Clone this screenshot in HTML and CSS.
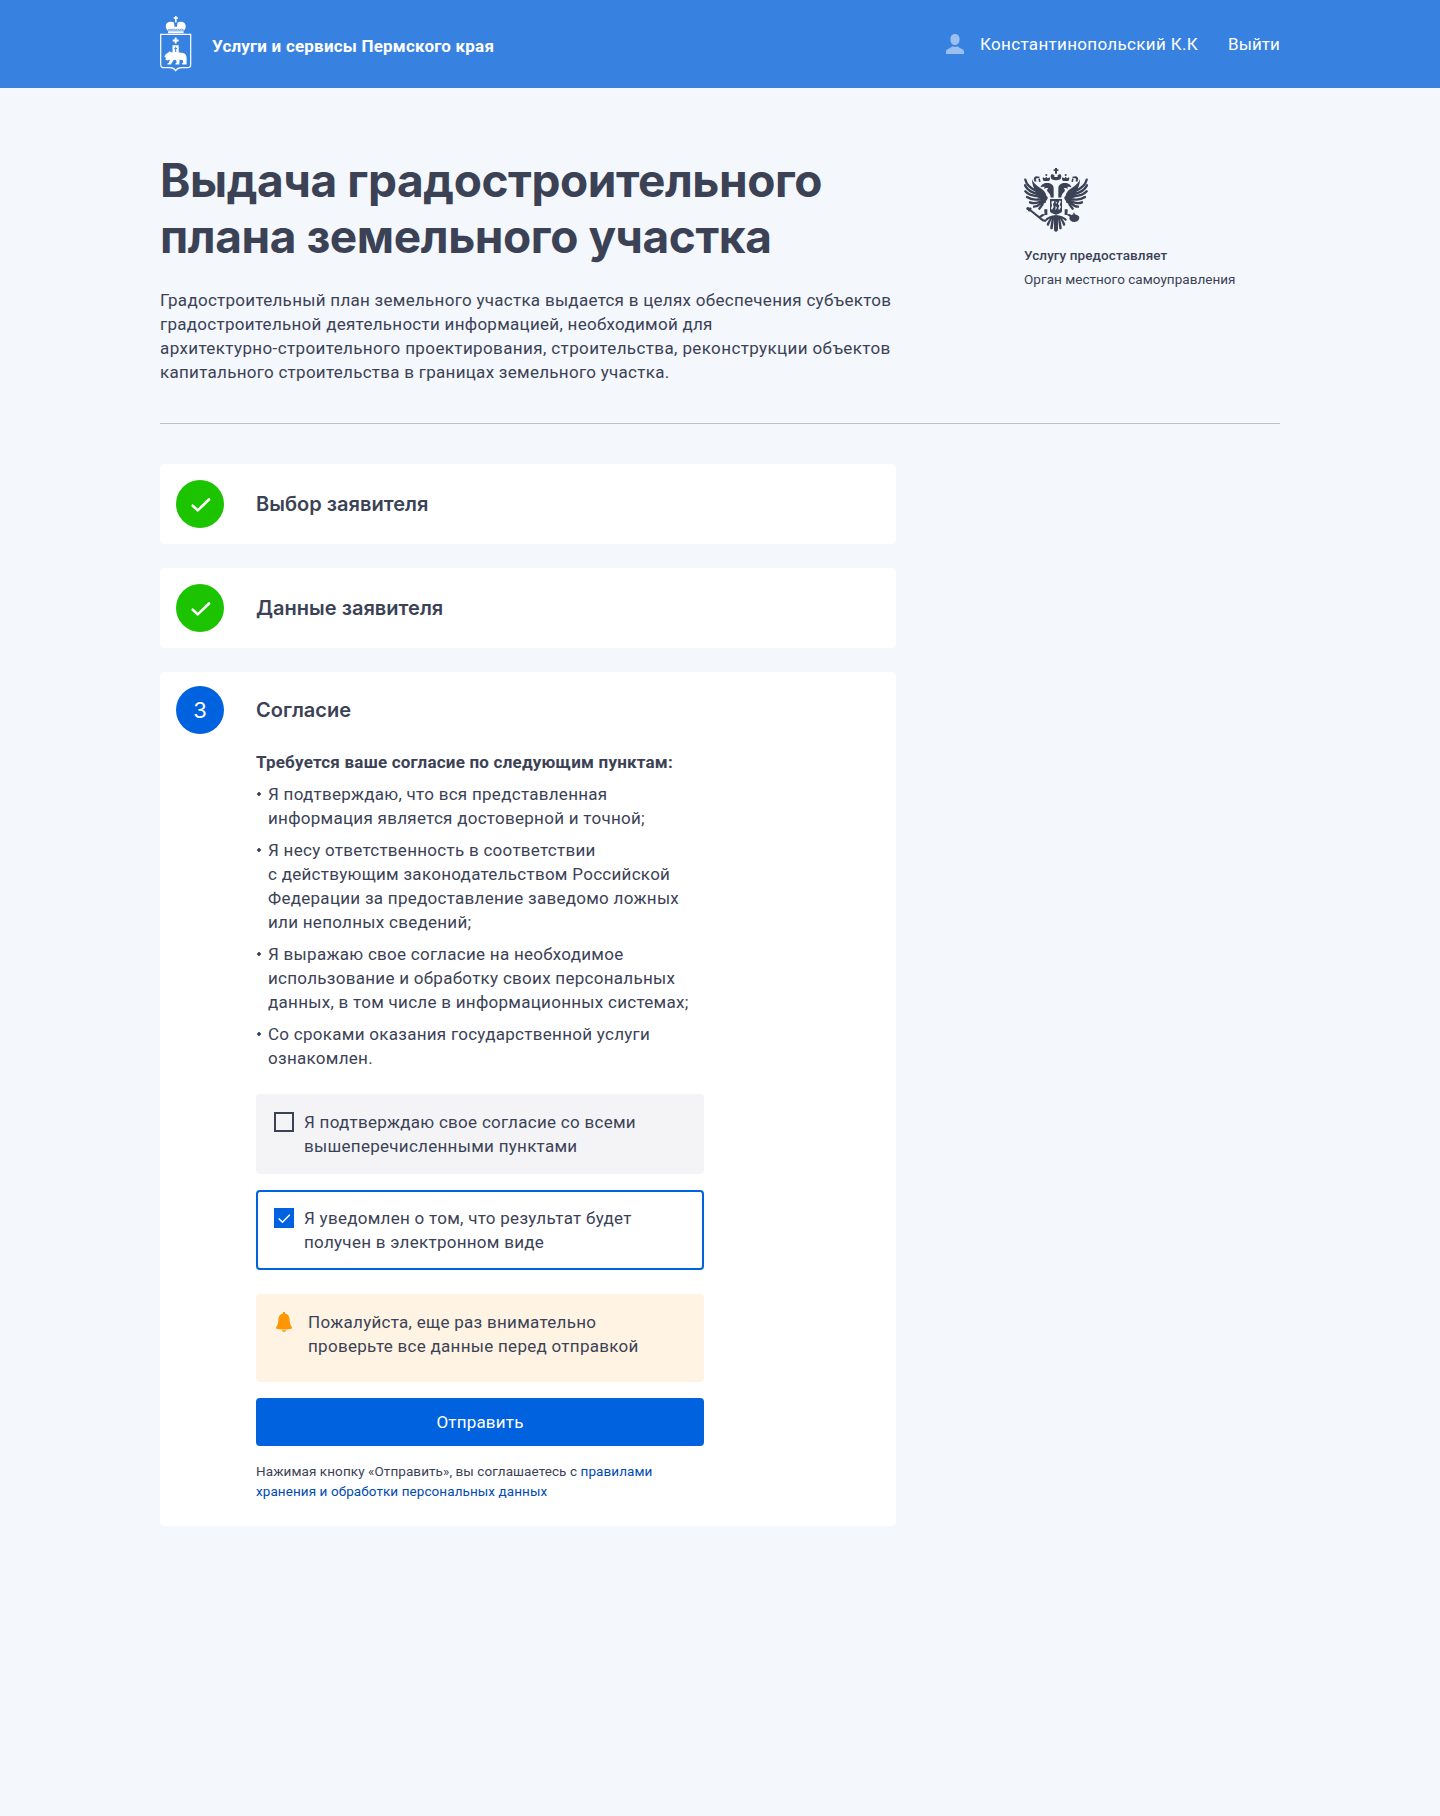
FILE: index.html
```html
<!DOCTYPE html>
<html lang="ru">
<head>
<meta charset="utf-8">
<title>Выдача градостроительного плана земельного участка</title>
<link rel="stylesheet" href="styles.css">
</head>
<body>
<header class="topbar">
  <div class="container topbar-inner">
    <a class="brand">
      <svg class="brand-emblem" width="32" height="56" viewBox="0 0 32 56">
        <path fill="#fff" d="M15 0h1.600v1.300H18v1.400h-1.400V5c0 1-.2 1.500-.8 1.500S15 6 15 5V2.700h-1.400V1.300H15zM14 6.500c-2.500-1.600-8-1-8.200 3.500-.1 2 .8 3.300 1.700 4.500h16.600c.9-1.200 1.700-2.500 1.600-4.500-.2-4.500-5.700-5.100-8.200-3.500l-.5 4.200h-2.500zM8 15.300h15.600v1.900H8z"/>
        <path fill="none" stroke="#3781e1" stroke-width=".7" d="M8 13.800q2-1.500 4 0 2-1.500 3.800 0 2-1.500 3.800 0 2-1.500 4 0"/>
        <path fill="none" stroke="#fff" stroke-width="1.200" d="M.7 18.400h30v30.300c0 2-1.300 3-3.300 3h-6c-2.500 0-4.400 1-5.700 2.900-1.300-1.900-3.200-2.900-5.700-2.900H4c-2 0-3.300-1-3.300-3z"/>
        <path fill="#fff" d="M14.700 21.500h1.900v2h2v1.900h-2v2.200h-1.900v-2.200h-2v-1.900h2zM12.500 29.300h6.200v7.200c3 .2 6 .2 7.200 2.500 1.100 2.200.6 5 .7 9.600h-4.200l-.5-1.200 1.300-.8-.6-2.600-3-.3-.3 4.900h-3.900l.2-1.300 1-.5-.3-2.600-2.500-.5-3 4.700H7.400l.2-1.200 1.300-.5 1-3.300-2.600 1.100-2.200-1.200 1.200-1.200-2-1.400c.8-2.400 2.400-3.300 4.100-4.200l1-1.300 1.400.8 1.700.4z"/>
        <path fill="#3781e1" d="M15.200 30.800h1v1.100h.8v1h-.8v3h-1v-3h-.8v-1h.8z"/>
      </svg>
      <span class="brand-name">Услуги и сервисы Пермского края</span>
    </a>
    <nav class="user-nav">
      <svg class="user-icon" width="18" height="20" viewBox="0 0 18 20" fill="#9bc0f0"><path d="M9 0c3 0 4.600 2 4.600 5.200C13.600 8.500 12 11 9 11S4.400 8.500 4.400 5.200C4.400 2 6 0 9 0zM0 20v-2.500c0-2 3.500-3 6-4.700l.6-.6c1.500.8 3.300.8 4.800 0l.6.6c2.500 1.700 6 2.700 6 4.700V20z"/></svg>
      <a class="user-name">Константинопольский К.К</a>
      <a class="logout">Выйти</a>
    </nav>
  </div>
</header>
<main class="container">
  <section class="intro">
    <div class="intro-main">
      <h1 class="title">Выдача градостроительного<br>плана земельного участка</h1>
      <p class="lead">Градостроительный план земельного участка выдается в целях обеспечения субъектов<br>градостроительной деятельности информацией, необходимой для<br><span class="lead-wide">архитектурно-строительного проектирования, строительства, реконструкции объектов</span><br>капитального строительства в границах земельного участка.</p>
    </div>
    <aside class="provider">
      <svg class="eagle" width="64" height="64" viewBox="42 39 192 192" fill="#3b4256">
        <defs><g id="half">
          <g fill="none" stroke="#3b4256" stroke-linecap="round" stroke-width="7">
            <path d="M46 74c4 17 16 26 34 34l30 20"/>
            <path d="M45 91c8 16 20 22 38 26l26 14"/>
            <path d="M46 109c10 12 24 14 38 15l20 9"/>
            <path d="M51 126c12 8 22 9 34 7l20 2"/>
            <path d="M60 142c9 4 18 3 28-1l16-3"/>
            <path d="M72 155c8 0 14-4 20-10l12-4"/>
            <path d="M88 161c4-4 6-8 10-14"/>
          </g>
          <path d="M66 72c2 9 12 19 28 29 12 8 16 17 17 33l-8 10-12-12-12-18c-6-12-13-24-13-42z"/>
          <path d="M92 97c0-7 9-13 20-13 10 0 18 5 19 15v29h-9c0-8-3-13-9-18-3-4-2-7 2-10-6-3-9 0-13 1 0-3 1-4 3-5-5-1-9-1-13 1z"/>
          <path d="M101 78c-3-4-4-8-2-11l6 3 4-5 4 5 6-3c2 4 1 8-2 11z"/>
          <path d="M74 80c-5-8-2-15 5-16l10 1-1 4-8 1c-3 1-3 5 0 9zM89 70l3 10-5 1-2-10zM125 73c-4-5-4-11 0-16l8 3v6h5v10c-5 0-9-1-13-3z"/>
          <circle cx="109" cy="60" r="3"/>
          <path d="M103 163h9v17h-7l-13 8-7-3 12-8 7 1c-1-7-1-11-1-15z"/>
          <path d="M138 180v50c-5 0-6-4-6-8v-30l-4 30c-6 3-8-1-7-6l4-25-9 21c-5 2-7-2-5-7l9-15-11 8c-4-1-4-5 0-8 6-5 14-9 29-10z"/>
        </g></defs>
        <use href="#half"/><use href="#half" transform="matrix(-1 0 0 1 276 0)"/>
        <path d="M135 39h6v4h4v5h-4v8h-6v-8h-4v-5h4z"/>
        <path d="M120 132h36v37c0 5-9 6-18 11-9-5-18-6-18-11z"/>
        <path fill="#f4f7fc" d="M113 128h50v3h-50zM124 140l6-3 3 4-4 6 2 9-5 9-3-5 3-8zM149 136l4 4-4 9 4 7-6 10-2-6 3-7-4-6 3-7zM137 138l4 5-3 4zM137 153l4 5-5 8z"/>
        <path d="M49 159c2-4 7-4 10-1 4-2 7 0 5 6l36 29 9 2-2 6-10-2-37-30c-3 3-6 1-6-3-4 0-6-4-5-7z"/>
        <path d="M190 173h4v5c8 1 13 5 14 9 0 9-6 14-15 14s-15-5-15-12c1-5 5-9 12-11z"/>
      </svg>
      <div class="provider-label">Услугу предоставляет</div>
      <div class="provider-name">Орган местного самоуправления</div>
    </aside>
  </section>
  <div class="steps">
    <section class="card step">
      <span class="badge badge-done"><svg width="20" height="16" viewBox="0 0 20 16" fill="none" stroke="#fff" stroke-width="2.600" stroke-linecap="round" stroke-linejoin="round"><path d="m1.800 8.700 4.900 4.700L18 2.500"/></svg></span>
      <h2 class="step-title">Выбор заявителя</h2>
    </section>
    <section class="card step">
      <span class="badge badge-done"><svg width="20" height="16" viewBox="0 0 20 16" fill="none" stroke="#fff" stroke-width="2.600" stroke-linecap="round" stroke-linejoin="round"><path d="m1.800 8.700 4.900 4.700L18 2.500"/></svg></span>
      <h2 class="step-title">Данные заявителя</h2>
    </section>
    <section class="card card-current">
      <div class="step step-active">
        <span class="badge badge-current">3</span>
        <h2 class="step-title">Согласие</h2>
      </div>
      <div class="consent">
        <h3 class="consent-title">Требуется ваше согласие по следующим пунктам:</h3>
        <ul class="points">
          <li>Я подтверждаю, что вся представленная<br>информация является достоверной и точной;</li>
          <li>Я несу ответственность в соответствии<br>с действующим законодательством Российской<br>Федерации за предоставление заведомо ложных<br>или неполных сведений;</li>
          <li>Я выражаю свое согласие на необходимое<br>использование и обработку своих персональных<br>данных, в том числе в информационных системах;</li>
          <li>Со сроками оказания государственной услуги<br>ознакомлен.</li>
        </ul>
        <label class="option">
          <span class="checkbox"></span>
          <span>Я подтверждаю свое согласие со всеми<br>вышеперечисленными пунктами</span>
        </label>
        <label class="option option-selected">
          <span class="checkbox checkbox-checked"><svg width="20" height="20" viewBox="0 0 20 20" fill="none" stroke="#fff" stroke-width="1.500"><path d="m4.700 10.500 3.800 3.800 7.300-7.600"/></svg></span>
          <span>Я уведомлен о том, что результат будет<br>получен в электронном виде</span>
        </label>
        <div class="notice">
          <svg class="bell" width="16" height="20" viewBox="0 0 16 20" fill="#ff9500"><path d="M7 0h2v1.500c3 .5 4.300 2.500 4.500 5.500.2 4 .8 6 2.500 8.500v1C14 17.300 11 17.500 8 17.500S2 17.300 0 16.500v-1C1.700 13 2.300 11 2.500 7 2.700 4 4 2 7 1.500zM5.800 18.300h4.400C10 19.500 9 20 8 20s-2-.5-2.200-1.700z"/></svg>
          <span>Пожалуйста, еще раз внимательно<br>проверьте все данные перед отправкой</span>
        </div>
        <button class="submit" type="button">Отправить</button>
        <p class="legal">Нажимая кнопку «Отправить», вы соглашаетесь с <a>правилами<br>хранения и обработки персональных данных</a></p>
      </div>
    </section>
  </div>
</main>
</body>
</html>
```
FILE: styles.css
```css
* { box-sizing: border-box; }
body { margin: 0; background: #f4f7fc; color: #3b4256; font: 400 17px/24px Roboto, sans-serif; letter-spacing: .28px; min-height: 1816px; }
h1, h2, h3, p, ul { margin: 0; padding: 0; }
.container { width: 1120px; margin: 0 auto; }
.topbar { height: 88px; background: #3781e1; color: #fff; }
.topbar-inner { height: 88px; display: flex; justify-content: space-between; }
.brand { display: flex; padding-top: 16px; }
.brand-name { font-weight: 700; padding: 18px 0 0 20px; letter-spacing: .2px; }
.user-nav { display: flex; padding-top: 32px; }
.user-icon { margin: 2px 16px 0 0; }
.user-name { letter-spacing: .33px; }
.logout { margin-left: 30px; letter-spacing: .08px; }
.intro { display: flex; justify-content: space-between; padding: 64px 0 0; border-bottom: 1px solid #bcc1cc; height: 336px; }
.title { font: 700 46px/56px Inter, sans-serif; letter-spacing: -.42px; white-space: nowrap; }
.lead { margin-top: 24px; white-space: nowrap; }
.lead-wide { letter-spacing: .385px; }
.provider { width: 256px; padding-top: 16px; font-size: 13.5px; letter-spacing: .03px; white-space: nowrap; }
.eagle { display: block; }
.provider-label { margin-top: 11px; font-weight: 500; letter-spacing: .1px; }
.steps { width: 736px; margin-top: 40px; display: flex; flex-direction: column; gap: 24px; }
.card { background: #fff; border-radius: 4px; }
.card-current { min-height: 854px; }
.step { display: flex; align-items: center; gap: 32px; height: 80px; padding: 0 16px; }
.step-active { height: 76px; }
.badge { width: 48px; height: 48px; border-radius: 50%; display: flex; align-items: center; justify-content: center; color: #fff; }
.badge-done { background: #1cc400; }
.badge-done svg { position: relative; top: 1px; left: 1px; }
.badge-current { background: #0062de; font: 400 22px/48px Inter, sans-serif; letter-spacing: 0; }
.step-title { font: 600 20px/28px Inter, sans-serif; letter-spacing: .02px; }
.consent { margin-left: 96px; width: 448px; padding: 2px 0 20px; white-space: nowrap; }
.consent-title { font-size: 17px; line-height: 24px; font-weight: 700; letter-spacing: .21px; }
.points { list-style: none; margin-top: 8px; display: flex; flex-direction: column; gap: 8px; }
.points li { padding-left: 12px; background: radial-gradient(circle at 3px 12px, #3b4256 1.500px, transparent 2px) no-repeat; }
.option { display: flex; gap: 10px; height: 80px; padding: 16px 18px; margin-top: 24px; background: #f4f4f7; border-radius: 4px; }
.option-selected { margin-top: 16px; background: #fff; border: 2px solid #0062de; padding: 14px 16px; }
.checkbox { width: 20px; height: 20px; margin-top: 2px; border: 2px solid #3b4256; flex: none; }
.checkbox-checked { background: #0062de; border: 0; }
.checkbox svg { display: block; }
.notice { display: flex; gap: 16px; height: 88px; padding: 16px 20px; margin-top: 24px; background: #fff4e3; border-radius: 4px; }
.bell { margin-top: 2px; }
.submit { display: block; width: 448px; height: 48px; margin-top: 16px; padding: 0; border: 0; border-radius: 4px; background: #0062de; color: #fff; font: 400 17px/48px Roboto, sans-serif; letter-spacing: .2px; }
.legal { margin-top: 15px; font-size: 13.5px; line-height: 20px; letter-spacing: .08px; }
.legal a { color: #004bb3; }
```
